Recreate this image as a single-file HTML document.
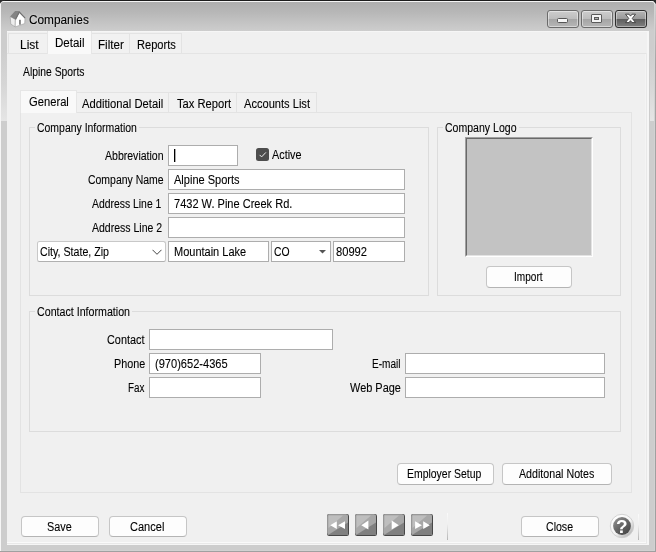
<!DOCTYPE html>
<html>
<head>
<meta charset="utf-8">
<title>Companies</title>
<style>
html,body{margin:0;padding:0;}
html{filter:grayscale(1);}
body{width:656px;height:552px;overflow:hidden;background:#c9c9c9;position:relative;
 font-family:"Liberation Sans",sans-serif;font-size:12px;color:#000;}
.a{position:absolute;box-sizing:border-box;}
.t{position:absolute;white-space:nowrap;line-height:14px;height:14px;transform-origin:0 0;color:#000;-webkit-text-stroke:0.1px #000;}
#frame{left:0;top:0;width:656px;height:552px;background:linear-gradient(#adadad 0px,#afafaf 3px,#b7b7b7 12px,#c3c3c3 22px,#cdcdcd 31px,#cdcdcd 100%);}
#client{left:7px;top:31px;width:642px;height:514px;background:#f0f0f0;}
.inp{background:#fff;border:1px solid #abadb3;}
.btn{background:#fdfdfd;border:1px solid #c6c6c6;border-bottom-color:#b4b4b4;border-radius:4px;}
.grp{border:1px solid #dcdcdc;}
.lg{background:#f0f0f0;}
.tab{border:1px solid #e3e3e3;border-bottom:none;background:#f1f1f1;}
.tabsel{background:#f9f9f9;border:1px solid #e6e6e6;border-bottom:none;}
.cap{border:1px solid #6b6b6b;border-radius:3px;background:linear-gradient(#cdcdcd 0,#bdbdbd 48%,#a5a5a5 52%,#b6b6b6 100%);box-shadow:inset 0 0 0 1px rgba(255,255,255,.45);}
</style>
</head>
<body>
<div class="a" id="frame"></div>
<div class="a" style="left:1px;top:48px;width:6px;height:73px;background:linear-gradient(#cdcdcd,#d6d6d6 50%,#e5e5e5);"></div>
<div class="a" style="left:650px;top:48px;width:5px;height:73px;background:linear-gradient(#cdcdcd,#d6d6d6 50%,#e5e5e5);"></div>
<div class="a" style="left:0;top:0;width:656px;height:1px;background:#1c1c1c;"></div>
<div class="a" style="left:1px;top:1px;width:654px;height:1px;background:#f4f4f4;"></div>
<div class="a" style="left:0;top:1px;width:1px;height:550px;background:#f6f6f6;"></div>
<div class="a" style="left:655px;top:3px;width:1px;height:549px;background:linear-gradient(#d0d0d0,#a4a4a4 60px,#a0a0a0);"></div>
<div class="a" style="left:654px;top:2px;width:1px;height:549px;background:#d2d2d2;"></div>
<div class="a" style="left:0;top:551px;width:656px;height:1px;background:#a0a0a0;"></div>
<div class="a" style="left:1px;top:550px;width:654px;height:1px;background:#d1d1d1;"></div>

<svg class="a" style="left:0;top:0" width="5" height="5" viewBox="0 0 5 5"><path d="M0 0 L4 0 L0 4 Z" fill="#2a2a2a"/><path d="M0.3 4.2 Q0.8 1.2 4.4 1.4" fill="none" stroke="#f0f0f0" stroke-width="0.9"/></svg>
<svg class="a" style="left:651px;top:0" width="5" height="5" viewBox="0 0 5 5"><path d="M5 0 L1 0 L5 4 Z" fill="#2a2a2a"/><path d="M3.8 4.2 Q3.4 1.4 0.6 1.4" fill="none" stroke="#f0f0f0" stroke-width="0.9"/></svg>
<!-- title icon -->
<svg class="a" style="left:9px;top:10px" width="18" height="18" viewBox="0 0 18 18">
 <path d="M1.2 6.6 L6.4 9.3 L6.2 16.9 L1.8 14.1 Z" fill="#ededed" stroke="#9c9c9c" stroke-width="0.6"/>
 <path d="M6.4 9.3 L10.3 2 L16 8 L15.7 13.5 L6.2 16.9 Z" fill="#ffffff" stroke="#9c9c9c" stroke-width="0.6"/>
 <path d="M1.1 6.5 L6.1 1.1 L9.7 1.1 L10.6 2.2 L6.5 9.5 Z" fill="#848484"/>
 <path d="M6.5 9.4 L10.3 2 L16.1 8.1" fill="none" stroke="#707070" stroke-width="1.2"/>
 <rect x="10.1" y="9.8" width="1.7" height="4.9" fill="#7a7a7a"/>
</svg>

<!-- caption buttons -->
<div class="a cap" style="left:547px;top:10px;width:32px;height:18px;"></div>
<div class="a" style="left:557px;top:18px;width:11px;height:5px;background:#f6f6f6;border:1px solid #555;border-radius:1.5px;"></div>
<div class="a cap" style="left:581px;top:10px;width:32px;height:18px;"></div>
<div class="a" style="left:591px;top:14px;width:11px;height:9px;background:#f4f4f4;border:1px solid #5a5a5a;border-radius:1px;"></div>
<div class="a" style="left:594px;top:17px;width:5px;height:3px;background:#b0b0b0;border:1px solid #5a5a5a;"></div>
<div class="a" style="left:615px;top:10px;width:32px;height:18px;border:1px solid #2e2e2e;border-radius:3px;background:linear-gradient(#b5b5b5 0,#9a9a9a 48%,#5e5e5e 52%,#808080 100%);box-shadow:inset 0 0 0 1px rgba(255,255,255,.4);"></div>
<svg class="a" style="left:624px;top:13px" width="14" height="11" viewBox="0 0 14 11">
 <path transform="translate(1.5,1.2)" d="M0 0 L3.5 0 L5 1.94 L6.5 0 L10 0 L6.75 4.2 L10 8.4 L6.5 8.4 L5 6.46 L3.5 8.4 L0 8.4 L3.25 4.2 Z" fill="#fbfbfb" stroke="#3c3c3c" stroke-width="0.9" stroke-linejoin="round"/>
</svg>

<div class="a" id="client"></div>
<div class="a" style="left:647px;top:31px;width:2px;height:514px;background:#f6f6f6;"></div>
<div class="a" style="left:7px;top:544px;width:642px;height:1px;background:#f6f6f6;"></div>
<div class="a" style="left:7px;top:31px;width:642px;height:1px;background:#f6f6f6;"></div>
<!-- outer tab page -->
<div class="a" style="left:7px;top:53px;width:640px;height:1px;background:#e4e4e4;"></div>
<div class="a" style="left:646px;top:53px;width:1px;height:491px;background:#e9e9e9;"></div>
<div class="a" style="left:645px;top:54px;width:1px;height:488px;background:#f4f4f4;"></div>
<div class="a" style="left:7px;top:543px;width:640px;height:1px;background:#e9e9e9;"></div>
<div class="a" style="left:7px;top:542px;width:639px;height:1px;background:#fafafa;"></div>
<!-- outer tabs -->
<div class="a tab" style="left:8px;top:33px;width:40px;height:20px;"></div>
<div class="a tab" style="left:91px;top:33px;width:39px;height:20px;"></div>
<div class="a tab" style="left:129px;top:33px;width:53px;height:20px;"></div>
<div class="a tabsel" style="left:47px;top:31px;width:45px;height:23px;border-top:none;"></div>

<!-- inner tab page -->
<div class="a" style="left:20px;top:112px;width:612px;height:381px;border:1px solid #e3e3e3;"></div>
<div class="a tab" style="left:75px;top:92px;width:95px;height:20px;"></div>
<div class="a tab" style="left:168px;top:92px;width:70px;height:20px;"></div>
<div class="a tab" style="left:236px;top:92px;width:81px;height:20px;"></div>
<div class="a tabsel" style="left:20px;top:90px;width:57px;height:23px;"></div>

<!-- Company Information group -->
<div class="a grp" style="left:29px;top:127px;width:400px;height:169px;"></div>
<div class="a lg" style="left:35px;top:122px;width:104px;height:12px;"></div>

<div class="a inp" style="left:168px;top:145px;width:70px;height:21px;"></div>
<div class="a" style="left:174px;top:149px;width:1px;height:13px;background:#000;"></div><div class="a" style="left:175px;top:149px;width:1px;height:13px;background:#aaa;"></div>
<!-- checkbox -->
<div class="a" style="left:256px;top:148px;width:13px;height:13px;background:#4d4d4d;border-radius:2.5px;"></div>
<svg class="a" style="left:256px;top:148px" width="13" height="13" viewBox="0 0 13 13"><path d="M3.6 6.9 L5.6 8.9 L9.9 4.4" fill="none" stroke="#f0f0f0" stroke-width="1"/></svg>

<div class="a inp" style="left:168px;top:169px;width:237px;height:21px;"></div>
<div class="a inp" style="left:168px;top:193px;width:237px;height:21px;"></div>
<div class="a inp" style="left:168px;top:217px;width:237px;height:21px;"></div>

<div class="a inp" style="left:37px;top:241px;width:129px;height:21px;border-color:#c8c8c8 #c8c8c8 #b0b0b0 #c8c8c8;border-radius:2.5px;"></div>
<svg class="a" style="left:152px;top:249px" width="10" height="7" viewBox="0 0 10 7"><path d="M0.5 0.8 L5 5.3 L9.5 0.8" fill="none" stroke="#444" stroke-width="1"/></svg>

<div class="a inp" style="left:168px;top:241px;width:101px;height:21px;"></div>
<div class="a inp" style="left:271px;top:241px;width:60px;height:21px;"></div>
<svg class="a" style="left:319px;top:250px" width="7" height="4" viewBox="0 0 7 4"><path d="M0 0 L7 0 L3.5 3.5 Z" fill="#555"/></svg>
<div class="a inp" style="left:333px;top:241px;width:72px;height:21px;"></div>

<!-- Company Logo group -->
<div class="a grp" style="left:437px;top:127px;width:184px;height:169px;"></div>
<div class="a lg" style="left:443px;top:122px;width:76px;height:12px;"></div>
<div class="a" style="left:465px;top:137px;width:128px;height:120px;border:1px solid;border-color:#a0a0a0 #fff #fff #a0a0a0;"></div>
<div class="a" style="left:466px;top:138px;width:126px;height:118px;background:#c3c3c3;border:1px solid;border-color:#696969 #e3e3e3 #e3e3e3 #696969;"></div>
<div class="a btn" style="left:486px;top:266px;width:86px;height:22px;"></div>

<!-- Contact Information group -->
<div class="a grp" style="left:29px;top:311px;width:592px;height:121px;"></div>
<div class="a lg" style="left:35px;top:306px;width:97px;height:12px;"></div>
<div class="a inp" style="left:149px;top:329px;width:184px;height:21px;"></div>
<div class="a inp" style="left:149px;top:353px;width:112px;height:21px;"></div>
<div class="a inp" style="left:149px;top:377px;width:112px;height:21px;"></div>
<div class="a inp" style="left:405px;top:353px;width:200px;height:21px;"></div>
<div class="a inp" style="left:405px;top:377px;width:200px;height:21px;"></div>

<!-- buttons -->
<div class="a btn" style="left:397px;top:463px;width:97px;height:22px;"></div>
<div class="a btn" style="left:502px;top:463px;width:110px;height:22px;"></div>
<div class="a btn" style="left:21px;top:516px;width:78px;height:21px;"></div>
<div class="a btn" style="left:109px;top:516px;width:78px;height:21px;"></div>
<div class="a btn" style="left:521px;top:516px;width:78px;height:21px;"></div>

<!-- nav buttons -->
<svg class="a" style="left:326px;top:513px" width="110" height="24" viewBox="0 0 110 24">
 <g id="nb">
  <rect x="1" y="1" width="22" height="22" rx="2.2" fill="#474747"/>
  <rect x="1" y="1" width="21" height="21" rx="2.2" fill="#989898"/>
  <rect x="2" y="2" width="20" height="20" rx="1.2" fill="#a8a8a8"/>
  <path d="M2 22 L22 9.5 L22 21 Q22 22 21 22 Z" fill="#808080"/>
  <path d="M2.5 2.5 L17 2.5 L2.5 15 Z" fill="#c6c6c6" opacity="0.75"/>
 </g>
 <use href="#nb" x="28"/><use href="#nb" x="56"/><use href="#nb" x="84"/>
 <path d="M10.8 8.3 L10.8 16 L4.3 12.2 Z M19 8.3 L19 16 L12.1 12.2 Z" fill="#fff"/>
 <path d="M42.4 7.6 L42.4 16.6 L35.3 12.2 Z" fill="#fff"/>
 <path d="M65.7 7.6 L65.7 16.6 L72.8 12.2 Z" fill="#fff"/>
 <path d="M89.1 8.3 L89.1 16 L95.9 12.2 Z M97.2 8.3 L97.2 16 L103.8 12.2 Z" fill="#fff"/>
</svg>
<div class="a" style="left:447px;top:513px;width:1px;height:27px;background:linear-gradient(#fafafa,#f0f0f0 40%,#b4b4b4);"></div>

<!-- help -->
<svg class="a" style="left:609px;top:513px" width="26" height="26" viewBox="0 0 26 26">
 <defs><linearGradient id="hg" x1="0.15" y1="0.1" x2="0.85" y2="0.9"><stop offset="0" stop-color="#8c8c8c"/><stop offset="0.5" stop-color="#646464"/><stop offset="1" stop-color="#484848"/></linearGradient>
 <linearGradient id="hr" x1="0.15" y1="0.1" x2="0.85" y2="0.9"><stop offset="0" stop-color="#ffffff"/><stop offset="0.55" stop-color="#f4f4f4"/><stop offset="1" stop-color="#b4b4b4"/></linearGradient></defs>
 <circle cx="13" cy="13" r="11.7" fill="url(#hr)" stroke="#cdcdcd" stroke-width="0.9"/>
 <circle cx="13" cy="13" r="8.9" fill="url(#hg)"/>
 <text x="12.8" y="19.6" text-anchor="middle" font-family="Liberation Sans, sans-serif" font-weight="bold" font-size="19" fill="#fff">?</text>
</svg>
<div class="a" style="left:638px;top:514px;width:1px;height:26px;background:linear-gradient(#fafafa,#f0f0f0 40%,#b4b4b4);"></div>

<div class="t" style="left:29.38px;top:13px;transform:scaleX(0.9853);text-shadow:0 0 5px rgba(255,255,255,.55),0 0 2px rgba(255,255,255,.35)">Companies</div>
<div class="t" style="left:19.51px;top:38px;transform:scaleX(0.9929)">List</div>
<div class="t" style="left:54.54px;top:36px;transform:scaleX(0.9610)">Detail</div>
<div class="t" style="left:97.78px;top:38px;transform:scaleX(0.9706)">Filter</div>
<div class="t" style="left:136.58px;top:38px;transform:scaleX(0.9231)">Reports</div>
<div class="t" style="left:23.14px;top:65px;transform:scaleX(0.8622)">Alpine Sports</div>
<div class="t" style="left:28.92px;top:95px;transform:scaleX(0.9333)">General</div>
<div class="t" style="left:81.88px;top:97px;transform:scaleX(0.9359)">Additional Detail</div>
<div class="t" style="left:176.77px;top:97px;transform:scaleX(0.9328)">Tax Report</div>
<div class="t" style="left:244.13px;top:97px;transform:scaleX(0.9244)">Accounts List</div>
<div class="t" style="left:36.96px;top:121px;transform:scaleX(0.8710)">Company Information</div>
<div class="t" style="left:445.20px;top:121px;transform:scaleX(0.8785)">Company Logo</div>
<div class="t" style="left:36.94px;top:305px;transform:scaleX(0.8886)">Contact Information</div>
<div class="t" style="left:105.39px;top:149px;transform:scaleX(0.8783)">Abbreviation</div>
<div class="t" style="left:88.21px;top:173px;transform:scaleX(0.8713)">Company Name</div>
<div class="t" style="left:92.39px;top:197px;transform:scaleX(0.8661)">Address Line 1</div>
<div class="t" style="left:92.39px;top:221px;transform:scaleX(0.8756)">Address Line 2</div>
<div class="t" style="left:272.29px;top:148px;transform:scaleX(0.9016)">Active</div>
<div class="t" style="left:174.14px;top:173px;transform:scaleX(0.9187)">Alpine Sports</div>
<div class="t" style="left:173.93px;top:197px;transform:scaleX(0.9193)">7432 W. Pine Creek Rd.</div>
<div class="t" style="left:40.20px;top:245px;transform:scaleX(0.8874)">City, State, Zip</div>
<div class="t" style="left:174.08px;top:245px;transform:scaleX(0.9159)">Mountain Lake</div>
<div class="t" style="left:274.21px;top:245px;transform:scaleX(0.8657)">CO</div>
<div class="t" style="left:336.03px;top:245px;transform:scaleX(0.9302)">80992</div>
<div class="t" style="left:513.56px;top:270px;transform:scaleX(0.8397)">Import</div>
<div class="t" style="left:106.93px;top:333px;transform:scaleX(0.9046)">Contact</div>
<div class="t" style="left:113.60px;top:357px;transform:scaleX(0.8981)">Phone</div>
<div class="t" style="left:127.93px;top:381px;transform:scaleX(0.8212)">Fax</div>
<div class="t" style="left:154.81px;top:357px;transform:scaleX(0.9226)">(970)652-4365</div>
<div class="t" style="left:372.41px;top:357px;transform:scaleX(0.8372)">E-mail</div>
<div class="t" style="left:349.89px;top:381px;transform:scaleX(0.9116)">Web Page</div>
<div class="t" style="left:407.38px;top:467px;transform:scaleX(0.8703)">Employer Setup</div>
<div class="t" style="left:518.89px;top:467px;transform:scaleX(0.8886)">Additonal Notes</div>
<div class="t" style="left:46.93px;top:520px;transform:scaleX(0.9048)">Save</div>
<div class="t" style="left:130.18px;top:520px;transform:scaleX(0.9199)">Cancel</div>
<div class="t" style="left:545.95px;top:520px;transform:scaleX(0.8814)">Close</div>
</body>
</html>
